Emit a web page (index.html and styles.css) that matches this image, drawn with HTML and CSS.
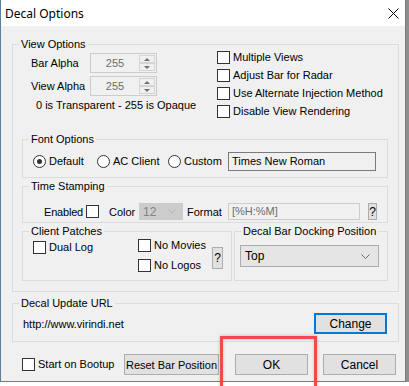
FILE: index.html
```html
<!DOCTYPE html>
<html lang="en">
<head>
    <meta charset="UTF-8">
    <title>Decal Options</title>
    <link rel="stylesheet" href="styles.css">
</head>
<body>
    <div class="screen">
        <div class="window">
            <div class="titlebar">
                <span class="title">Decal Options</span>
                <svg class="close" width="11" height="11" viewBox="0 0 11 11">
                    <path d="M0.5 0.5 L10.5 10.5 M10.5 0.5 L0.5 10.5" stroke="#000" stroke-width="1" fill="none"/>
                </svg>
            </div>
            <div class="client">
                <fieldset class="group view-options">
                    <legend>View Options</legend>
                    <div class="view-body">
                        <div class="view-top">
                            <div class="alpha-col">
                                <div class="alpha-row">
                                    <span class="alpha-label">Bar Alpha</span>
                                    <div class="spin">
                                        <span class="spin-value">255</span>
                                        <div class="spin-buttons">
                                            <span class="spin-btn"><span class="tri-up"></span></span>
                                            <span class="spin-btn"><span class="tri-down"></span></span>
                                        </div>
                                    </div>
                                </div>
                                <div class="alpha-row">
                                    <span class="alpha-label">View Alpha</span>
                                    <div class="spin">
                                        <span class="spin-value">255</span>
                                        <div class="spin-buttons">
                                            <span class="spin-btn"><span class="tri-up"></span></span>
                                            <span class="spin-btn"><span class="tri-down"></span></span>
                                        </div>
                                    </div>
                                </div>
                                <div class="alpha-note">0 is Transparent - 255 is Opaque</div>
                            </div>
                            <div class="check-col">
                                <label class="check"><span class="box"></span>Multiple Views</label>
                                <label class="check"><span class="box"></span>Adjust Bar for Radar</label>
                                <label class="check"><span class="box"></span>Use Alternate Injection Method</label>
                                <label class="check"><span class="box"></span>Disable View Rendering</label>
                            </div>
                        </div>

                        <fieldset class="group font-options">
                            <legend>Font Options</legend>
                            <div class="font-row">
                                <label class="radio w-default"><span class="dot checked"></span>Default</label>
                                <label class="radio w-ac"><span class="dot"></span>AC Client</label>
                                <label class="radio w-custom"><span class="dot"></span>Custom</label>
                                <div class="textbox font-name">Times New Roman</div>
                            </div>
                        </fieldset>

                        <fieldset class="group time-stamping">
                            <legend>Time Stamping</legend>
                            <div class="time-row">
                                <span class="enabled-label">Enabled</span>
                                <span class="box"></span>
                                <span class="color-label">Color</span>
                                <div class="select select-disabled color-select">
                                    <span>12</span>
                                    <svg width="8" height="5" viewBox="0 0 8 5"><path d="M0.5 0.5 L4 4 L7.5 0.5" stroke="#b4b4b4" fill="none"/></svg>
                                </div>
                                <span class="format-label">Format</span>
                                <div class="textbox textbox-disabled format-box">[%H:%M]</div>
                                <button class="btn help-small">?</button>
                            </div>
                        </fieldset>

                        <div class="pair">
                            <fieldset class="group patches">
                                <legend>Client Patches</legend>
                                <div class="patch-row">
                                    <label class="check dual-log"><span class="box"></span>Dual Log</label>
                                    <div class="patch-col">
                                        <label class="check"><span class="box"></span>No Movies</label>
                                        <label class="check"><span class="box"></span>No Logos</label>
                                    </div>
                                    <button class="btn help-tall">?</button>
                                </div>
                            </fieldset>
                            <fieldset class="group docking">
                                <legend>Decal Bar Docking Position</legend>
                                <div class="select dock-select">
                                    <span>Top</span>
                                    <svg width="9" height="5" viewBox="0 0 9 5"><path d="M0.5 0.5 L4.5 4.5 L8.5 0.5" stroke="#6a6a6a" fill="none"/></svg>
                                </div>
                            </fieldset>
                        </div>
                    </div>
                </fieldset>

                <fieldset class="group update-url">
                    <legend>Decal Update URL</legend>
                    <div class="url-row">
                        <span class="url-text">http://www.virindi.net</span>
                        <button class="btn btn-default">Change</button>
                    </div>
                </fieldset>

                <div class="footer">
                    <label class="check bootup"><span class="box"></span>Start on Bootup</label>
                    <button class="btn reset-btn">Reset Bar Position</button>
                    <button class="btn ok-btn">OK</button>
                    <button class="btn cancel-btn">Cancel</button>
                </div>
            </div>
        </div>
        <div class="desktop-strip"></div>
        <div class="highlight"></div>
    </div>
</body>
</html>
```

FILE: styles.css
```css
body {
    margin: 0;
    padding: 0;
    background-color: #fff;
    font-family: "Liberation Sans", Arial, sans-serif;
    font-size: 11px;
    color: #000;
}
.screen {
    position: relative;
    display: flex;
    width: 409px;
    height: 386px;
    overflow: hidden;
}
.desktop-strip {
    width: 3px;
    height: 382px;
    background-color: #8e8e8e;
}
.window {
    box-sizing: border-box;
    width: 406px;
    height: 382px;
    border-left: 1px solid #5d7d99;
    border-right: 1px solid #7a7a7a;
    border-bottom: 1px solid #7a7a7a;
    background-color: #f0f0f0;
}
.titlebar {
    height: 26px;
    background-color: #fff;
    display: flex;
    align-items: center;
    justify-content: space-between;
    padding: 0 6px 0 4px;
}
.title {
    font-family: "Noto Sans", "Open Sans", sans-serif;
    font-size: 12px;
}
.close {
    margin-top: 1px;
}
.client {
    padding: 12px 6px 0 11px;
}

/* group boxes: horizontal padding lives on the inner rows so legends stay put */
.group {
    margin: 0;
    padding: 0;
    min-width: 0;
    border: 1px solid #dcdcdc;
}
.group legend {
    padding: 0 2px;
    margin-left: 6px;
    line-height: 13px;
}
.view-body {
    padding: 0 10px 10px 9px;
}

/* top part */
.view-top {
    display: flex;
    height: 82px;
}
.alpha-col {
    width: 186px;
    padding: 2px 0 0 9px;
}
.alpha-row {
    display: flex;
    align-items: center;
    height: 20px;
    margin-bottom: 3px;
}
.alpha-label {
    width: 59px;
}
.spin {
    box-sizing: border-box;
    display: flex;
    width: 67px;
    height: 20px;
    border: 1px solid #cccccc;
    background-color: #f0f0f0;
}
.spin-value {
    flex: 1;
    text-align: center;
    line-height: 18px;
    color: #6d6d6d;
}
.spin-buttons {
    display: flex;
    flex-direction: column;
    width: 16px;
    margin: 1px 1px 1px 0;
}
.spin-btn {
    box-sizing: border-box;
    flex: 1;
    display: flex;
    align-items: center;
    justify-content: center;
    border: 1px solid #d4d4d4;
}
.tri-up {
    border-left: 3px solid transparent;
    border-right: 3px solid transparent;
    border-bottom: 3px solid #707070;
}
.tri-down {
    border-left: 3px solid transparent;
    border-right: 3px solid transparent;
    border-top: 3px solid #707070;
}
.alpha-note {
    margin: 3px 0 0 5px;
    line-height: 13px;
}
.check {
    display: flex;
    align-items: center;
    height: 13px;
    line-height: 13px;
    margin-bottom: 5px;
}
.box {
    box-sizing: border-box;
    flex: none;
    width: 13px;
    height: 13px;
    border: 1px solid #333;
    background-color: #fff;
    margin-right: 3px;
}

/* font options */
.font-options {
    padding: 6px 0;
}
.font-row {
    display: flex;
    align-items: center;
    height: 19px;
    padding-left: 10px;
}
.radio {
    display: flex;
    align-items: center;
    line-height: 13px;
}
.w-default { width: 64px; }
.w-ac { width: 71px; }
.w-custom { width: 60px; }
.dot {
    box-sizing: border-box;
    position: relative;
    width: 13px;
    height: 13px;
    border: 1px solid #333;
    border-radius: 50%;
    background-color: #fff;
    margin-right: 3px;
}
.dot.checked::after {
    content: "";
    position: absolute;
    left: 3px;
    top: 3px;
    width: 5px;
    height: 5px;
    border-radius: 50%;
    background-color: #333;
}
.textbox {
    box-sizing: border-box;
    height: 19px;
    line-height: 17px;
    padding-left: 3px;
    border: 1px solid #7a7a7a;
    background-color: #f0f0f0;
}
.font-name {
    width: 148px;
}

/* time stamping */
.time-stamping {
    margin-top: 2px;
    padding: 10px 0 2px;
}
.time-row {
    display: flex;
    align-items: center;
    height: 17px;
    padding-left: 21px;
}
.enabled-label {
    width: 42px;
    letter-spacing: -0.2px;
}
.time-row .box {
    margin-right: 10px;
}
.color-label {
    width: 30px;
}
.select {
    box-sizing: border-box;
    display: flex;
    align-items: center;
    justify-content: space-between;
}
.select-disabled {
    background-color: #cccccc;
    border: 1px solid #cccccc;
    color: #838383;
}
.color-select {
    width: 44px;
    height: 17px;
    padding: 0 6px 0 3px;
    margin-right: 4px;
    font-size: 12px;
}
.format-label {
    width: 41px;
}
.textbox-disabled {
    height: 17px;
    line-height: 15px;
    border-color: #cccccc;
    color: #6d6d6d;
}
.format-box {
    width: 132px;
    margin-right: 8px;
}
.btn {
    box-sizing: border-box;
    margin: 0;
    padding: 0;
    font-family: "Liberation Sans", Arial, sans-serif;
    font-size: 12px;
    white-space: nowrap;
    color: #000;
    background-color: #e1e1e1;
    border: 1px solid #adadad;
    height: 21px;
}
.help-small {
    width: 9px;
    height: 17px;
}

/* client patches + docking */
.pair {
    display: flex;
    margin-top: 2px;
}
.patches {
    box-sizing: border-box;
    width: 210px;
    height: 56px;
    margin-right: 2px;
}
.patch-row {
    display: flex;
    align-items: flex-start;
    padding-left: 10px;
}
.dual-log {
    width: 105px;
    margin-top: 3px;
}
.patch-col {
    width: 74px;
    margin-top: 1px;
}
.patch-col .check {
    margin-bottom: 7px;
}
.help-tall {
    width: 11px;
    height: 22px;
    margin-top: 9px;
}
.docking {
    box-sizing: border-box;
    flex: 1;
    height: 56px;
    padding-top: 7px;
}
.dock-select {
    width: 139px;
    height: 22px;
    margin-left: 5px;
    padding: 0 8px 0 4px;
    border: 1px solid #acacac;
    background-color: #e5e5e5;
    font-size: 12px;
}

/* update url */
.update-url {
    margin-top: 5px;
    padding: 3px 0 7px;
}
.url-row {
    display: flex;
    align-items: center;
    justify-content: space-between;
    padding: 0 11px 0 10px;
}
.btn-default {
    width: 73px;
    border: 2px solid #0078d7;
}

/* footer */
.footer {
    display: flex;
    align-items: center;
    padding: 12px 0 0 10px;
}
.bootup {
    width: 102px;
    margin-bottom: 0;
}
.reset-btn {
    width: 95px;
    margin-right: 16px;
    font-size: 11px;
}
.ok-btn {
    width: 73px;
    margin-right: 15px;
}
.cancel-btn {
    width: 73px;
}

/* annotation box drawn over the OK button */
.highlight {
    position: absolute;
    left: 220px;
    top: 336px;
    width: 91px;
    height: 60px;
    border: 3px solid #f04a4a;
    box-shadow: 0 0 3px rgba(0, 0, 0, 0.25), inset 0 0 3px rgba(0, 0, 0, 0.2);
}
```
